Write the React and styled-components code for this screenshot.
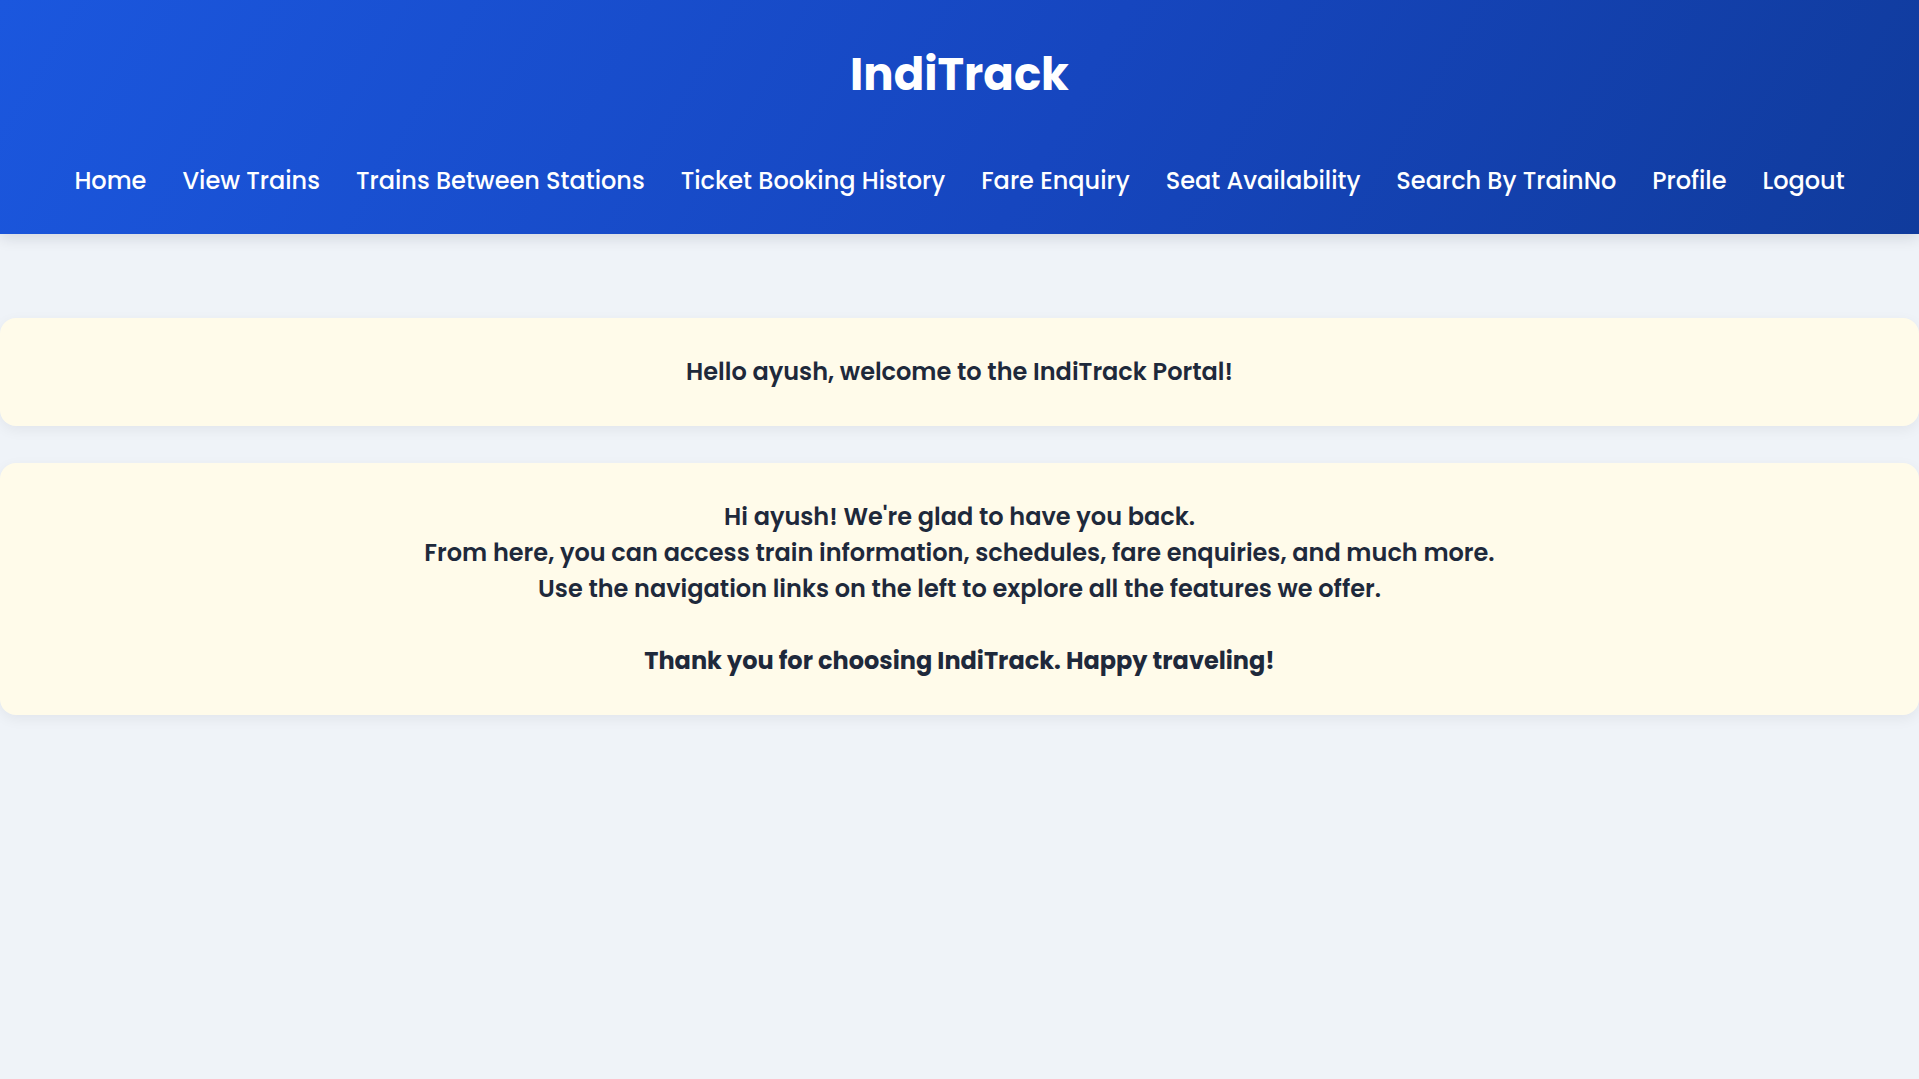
import React from "react";
import styled, { createGlobalStyle } from "styled-components";

const GlobalStyle = createGlobalStyle`
  html, body {
    margin: 0;
    padding: 0;
    background: #eff3f8;
    font-family: "Poppins", "Inter", "Open Sans", sans-serif;
    color: #1e293b;
  }
  * {
    box-sizing: border-box;
  }
`;

const navLinks = [
  "Home",
  "View Trains",
  "Trains Between Stations",
  "Ticket Booking History",
  "Fare Enquiry",
  "Seat Availability",
  "Search By TrainNo",
  "Profile",
  "Logout",
];

function App() {
  return (
    <Page>
      <GlobalStyle />
      <Header>
        <Title>IndiTrack</Title>
        <Nav>
          {navLinks.map((link) => (
            <NavLink key={link} href="#">
              {link}
            </NavLink>
          ))}
        </Nav>
      </Header>
      <Main>
        <Card>
          <Message>Hello ayush, welcome to the IndiTrack Portal!</Message>
        </Card>
        <Card>
          <Message>
            Hi ayush! We're glad to have you back.
            <br />
            From here, you can access train information, schedules, fare
            enquiries, and much more.
            <br />
            Use the navigation links on the left to explore all the features we
            offer.
            <br />
            <br />
            <Strong>Thank you for choosing IndiTrack. Happy traveling!</Strong>
          </Message>
        </Card>
      </Main>
    </Page>
  );
}

const Page = styled.div`
  min-height: 100vh;
  background: #eff3f8;
`;

const Header = styled.header`
  display: flex;
  flex-direction: column;
  align-items: center;
  padding: 40px 0 35px;
  background: linear-gradient(120deg, #1b57de 0%, #1646bf 55%, #103b9c 100%);
  box-shadow: 0 4px 14px rgba(15, 23, 42, 0.12);
`;

const Title = styled.h1`
  margin: 0;
  font-size: 45px;
  line-height: 70px;
  font-weight: 700;
  color: #ffffff;
`;

const Nav = styled.nav`
  display: flex;
  justify-content: center;
  gap: 36px;
  margin-top: 53px;
`;

const NavLink = styled.a`
  font-size: 24px;
  line-height: 36px;
  font-weight: 500;
  color: #ffffff;
  text-decoration: none;
  white-space: nowrap;
`;

const Main = styled.main`
  display: flex;
  flex-direction: column;
  gap: 37px;
  padding-top: 84px;
`;

const Card = styled.section`
  background: #fffbea;
  border-radius: 16px;
  padding: 36px 20px;
  box-shadow: 0 4px 14px rgba(15, 23, 42, 0.06);
`;

const Message = styled.p`
  margin: 0;
  text-align: center;
  font-size: 24px;
  line-height: 36px;
  font-weight: 600;
  color: #1e293b;
`;

const Strong = styled.strong`
  font-weight: 700;
`;

export default App;
